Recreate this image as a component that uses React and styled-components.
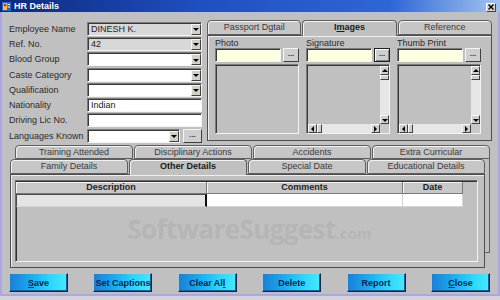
import React from 'react'
import styled, { createGlobalStyle } from 'styled-components'

const GlobalStyle = createGlobalStyle`
  * { box-sizing: border-box; }
  html, body { margin: 0; padding: 0; background: #d4d4d8; }
  body {
    font-family: "Liberation Sans", Arial, sans-serif;
    font-size: 9px;
    color: #262626;
  }
`

const Window = styled.div`
  width: 500px;
  display: flex;
  flex-direction: column;
`

const TitleBar = styled.div`
  height: 12px;
  display: flex;
  align-items: center;
  gap: 3px;
  padding: 0 4px 0 2px;
  background: linear-gradient(to right, #0b2a7e 0%, #1f4fc0 40%, #2f66d6 78%, #a3c4f0 100%);
  color: #fff;
  font-weight: bold;
  font-size: 9px;
`

const TitleText = styled.span`
  flex: 1;
`

const CloseBox = styled.div`
  width: 10px;
  height: 9px;
  margin-top: 2px;
  background: #d6d3ce;
  border: 1px solid;
  border-color: #fff #404040 #404040 #fff;
  display: flex;
  align-items: center;
  justify-content: center;
`

const Body = styled.div`
  background: #c0c0c0;
  border: 2px solid #aca6e6;
  border-top: none;
  padding: 8px 6px 2px 7px;
  display: flex;
  flex-direction: column;
`

const TopSection = styled.div`
  display: flex;
  gap: 5px;
  height: 121px;
`

const Form = styled.div`
  width: 193px;
  padding-top: 1px;
  display: grid;
  grid-template-columns: 78px 115px;
  grid-auto-rows: 15.3px;
  align-items: center;
`

const Label = styled.div`
  white-space: nowrap;
  color: #2a2a2a;
`

const Field = styled.div`
  height: 14px;
  width: ${({ $w }) => ($w ? `${$w}px` : '100%')};
  flex: ${({ $w }) => ($w ? 'none' : '1')};
  background: ${({ $tone }) =>
    $tone === 'gray' ? '#d8d8d8' : $tone === 'yellow' ? '#ffffe1' : '#fff'};
  border: 1px solid;
  border-color: #7a7a7a #f4f4f4 #f4f4f4 #7a7a7a;
  box-shadow: inset 1px 1px 0 #3a3a3a;
  display: flex;
  align-items: stretch;
`

const FieldText = styled.span`
  flex: 1;
  padding: 1px 0 0 3px;
  line-height: 11px;
  color: #222;
  white-space: nowrap;
  overflow: hidden;
`

const DropButton = styled.div`
  width: 10px;
  margin: 1px 0 0 0;
  background: #d4d0c8;
  border: 1px solid;
  border-color: #f8f8f8 #404040 #404040 #f8f8f8;
  display: flex;
  align-items: center;
  justify-content: center;
`

const Arrow = styled.span`
  width: 0;
  height: 0;
  border: 3px solid transparent;
  ${({ $dir }) =>
    ({
      down: 'border-top: 3px solid #000; border-bottom: none; margin-top: 1px;',
      up: 'border-bottom: 3px solid #000; border-top: none;',
      left: 'border-right: 3px solid #000; border-left: none;',
      right: 'border-left: 3px solid #000; border-right: none;',
    })[$dir]}
`

const InlineRow = styled.div`
  display: flex;
  align-items: center;
  gap: ${({ $gap }) => $gap || 2}px;
`

const DotsButton = styled.div`
  width: ${({ $w }) => $w || 16}px;
  height: 14px;
  flex: none;
  background: #cfcfcf;
  border: 1px solid;
  border-color: ${({ $focused }) =>
    $focused ? '#202020' : '#f4f4f4 #404040 #404040 #f4f4f4'};
  box-shadow: ${({ $focused }) => ($focused ? 'inset 1px 1px 0 #fff, inset -1px -1px 0 #808080' : 'none')};
  font-size: 8px;
  font-weight: bold;
  line-height: 9px;
  text-align: center;
  color: #333;
`

const TabControl = styled.div`
  width: 285px;
  display: flex;
  flex-direction: column;
`

const TabStrip = styled.div`
  display: flex;
  gap: ${({ $gap }) => $gap}px;
  height: ${({ $h }) => $h}px;
  margin: ${({ $m }) => $m || '0'};
  position: relative;
  z-index: 2;
`

const Tab = styled.div`
  flex: 1;
  height: ${({ $active }) => ($active ? 'calc(100% + 1px)' : '100%')};
  border: 1px solid #5e5e5e;
  border-bottom: ${({ $active }) => ($active ? 'none' : '1px solid #5e5e5e')};
  border-radius: 4px 4px 0 0;
  background: ${({ $active }) => ($active ? '#c0c0c0' : '#c6c6c6')};
  box-shadow: inset 1px 1px 0 #f2f2f2;
  text-align: center;
  line-height: 13px;
  font-weight: ${({ $active }) => ($active ? 'bold' : 'normal')};
  color: ${({ $active }) => ($active ? '#1a1a1a' : '#3a3a3a')};
  white-space: nowrap;
  overflow: hidden;
`

const ImagesPanel = styled.div`
  flex: 1;
  position: relative;
  z-index: 1;
  background: #c0c0c0;
  border: 1px solid #4e4e4e;
  box-shadow: inset 1px 1px 0 #eeeeee;
  padding: 2px 8px 0 7px;
  display: grid;
  grid-template-columns: repeat(3, 84px);
  column-gap: 7px;
  align-content: start;
`

const ImageColumn = styled.div`
  display: flex;
  flex-direction: column;
`

const Caption = styled.div`
  height: 10px;
  line-height: 10px;
  color: #2a2a2a;
`

const ScrollBox = styled.div`
  margin-top: 2px;
  height: 70px;
  background: #c0c0c0;
  border: 1px solid;
  border-color: #7a7a7a #f4f4f4 #f4f4f4 #7a7a7a;
  box-shadow: inset 1px 1px 0 #3a3a3a;
  padding: 1px 0 0 1px;
  display: grid;
  grid-template-columns: ${({ $scroll }) => ($scroll ? '1fr 9px' : '1fr')};
  grid-template-rows: ${({ $scroll }) => ($scroll ? '1fr 9px' : '1fr')};
`

const ScrollBar = styled.div`
  display: flex;
  flex-direction: ${({ $vertical }) => ($vertical ? 'column' : 'row')};
  background: #e6e6e6;
`

const ScrollButton = styled.div`
  width: 9px;
  height: 9px;
  flex: none;
  background: #d0d0d0;
  border: 1px solid;
  border-color: #f8f8f8 #404040 #404040 #f8f8f8;
  display: flex;
  align-items: center;
  justify-content: center;
`

const ScrollThumb = styled.div`
  flex: none;
  width: ${({ $vertical }) => ($vertical ? '9px' : '5px')};
  height: ${({ $vertical }) => ($vertical ? '5px' : '9px')};
  background: #d0d0d0;
  border: 1px solid;
  border-color: #f8f8f8 #404040 #404040 #f8f8f8;
`

const ScrollTrack = styled.div`
  flex: 1;
`

const Corner = styled.div`
  background: #c8c8c8;
`

const BottomTabs = styled.div`
  position: relative;
  margin-top: 4px;
  display: flex;
  flex-direction: column;

  &::after {
    content: '';
    position: absolute;
    right: 2px;
    top: 14px;
    bottom: 15px;
    width: 7px;
    background: #c0c0c0;
    border: 1px solid #5e5e5e;
    border-left: none;
    border-top: none;
    z-index: 0;
  }
`

const DetailsPanel = styled.div`
  height: 94px;
  margin: 0 7px 0 1px;
  position: relative;
  z-index: 1;
  background: #c0c0c0;
  border: 1px solid #4e4e4e;
  box-shadow: inset 1px 1px 0 #eeeeee;
  padding: 5px 6px 5px 4px;
`

const Grid = styled.div`
  height: 100%;
  background: #c0c0c0;
  border: 1px solid;
  border-color: #6a6a6a #f4f4f4 #f4f4f4 #6a6a6a;
  box-shadow: inset 1px 1px 0 #303030;
  padding: 1px 0 0 0;
  display: flex;
  flex-direction: column;
`

const GridRow = styled.div`
  display: flex;
  height: ${({ $h }) => $h}px;
  flex: none;
`

const HeaderCell = styled.div`
  width: ${({ $w }) => $w}px;
  background: #c8c8c8;
  border-right: 1px solid #7a7a7a;
  border-bottom: 1px solid #7a7a7a;
  box-shadow: inset 1px 1px 0 #f4f4f4;
  font-weight: bold;
  text-align: center;
  line-height: 11px;
  color: #222;
`

const DataCell = styled.div`
  width: ${({ $w }) => $w}px;
  background: ${({ $current }) => ($current ? '#e4e4e4' : '#ffffff')};
  border: ${({ $current }) => ($current ? '1px solid #4a4a4a' : 'none')};
  border-right: ${({ $current }) => ($current ? '2px solid #101010' : '1px solid #d4d4d4')};
  border-bottom: 1px solid #d4d4d4;
`

const WatermarkArea = styled.div`
  flex: 1;
  display: flex;
  align-items: center;
  justify-content: center;
  padding: 0 0 10px 6px;
`

const Watermark = styled.div`
  font-family: "Open Sans", "Liberation Sans", sans-serif;
  font-weight: bold;
  font-size: 26px;
  letter-spacing: -0.6px;
  color: #b5b5b5;

  span {
    font-size: 15px;
    letter-spacing: 0;
  }
`

const ButtonBar = styled.div`
  width: 481px;
  margin-top: 5px;
  display: flex;
  justify-content: space-between;
`

const ActionButton = styled.button`
  width: 59px;
  height: 19px;
  padding: 0;
  border: 1px solid;
  border-color: #a8c8dc #1a2640 #1a2640 #a8c8dc;
  box-shadow: inset -1px -1px 0 #2a5a90;
  background: linear-gradient(to right, #1a80d8 0%, #18aaf0 35%, #2ad6ff 70%, #48e8ff 100%);
  font-family: "Liberation Sans", Arial, sans-serif;
  font-size: 9px;
  font-weight: bold;
  color: #0e1c4a;

  u {
    text-decoration-thickness: 1px;
  }
`

const Combo = ({ text, tone, width }) => (
  <Field $tone={tone} $w={width}>
    <FieldText>{text}</FieldText>
    <DropButton>
      <Arrow $dir="down" />
    </DropButton>
  </Field>
)

const ImageSlot = ({ caption, scroll, focused }) => (
  <ImageColumn>
    <Caption>{caption}</Caption>
    <InlineRow $gap={2}>
      <Field $tone="yellow" />
      <DotsButton $focused={focused}>...</DotsButton>
    </InlineRow>
    <ScrollBox $scroll={scroll}>
      <div />
      {scroll && (
        <>
          <ScrollBar $vertical>
            <ScrollButton>
              <Arrow $dir="up" />
            </ScrollButton>
            <ScrollThumb $vertical />
            <ScrollTrack />
            <ScrollButton>
              <Arrow $dir="down" />
            </ScrollButton>
          </ScrollBar>
          <ScrollBar>
            <ScrollButton>
              <Arrow $dir="left" />
            </ScrollButton>
            <ScrollThumb />
            <ScrollTrack />
            <ScrollButton>
              <Arrow $dir="right" />
            </ScrollButton>
          </ScrollBar>
          <Corner />
        </>
      )}
    </ScrollBox>
  </ImageColumn>
)

const AppIcon = () => (
  <svg width="9" height="9" viewBox="0 0 9 9">
    <rect x="0" y="0" width="9" height="9" fill="#2a64c8" />
    <rect x="1" y="1" width="4" height="7" fill="#f2c230" />
    <circle cx="3" cy="3" r="1.3" fill="#c03018" />
    <rect x="5.5" y="2" width="2.5" height="1" fill="#fff" />
    <rect x="5.5" y="4.5" width="2.5" height="1" fill="#fff" />
  </svg>
)

const CloseIcon = () => (
  <svg width="6" height="6" viewBox="0 0 6 6">
    <path d="M0.5 0.5 L5.5 5.5 M5.5 0.5 L0.5 5.5" stroke="#000" strokeWidth="1.4" />
  </svg>
)

export default function App() {
  return (
    <>
      <GlobalStyle />
      <Window>
        <TitleBar>
          <AppIcon />
          <TitleText>HR Details</TitleText>
          <CloseBox>
            <CloseIcon />
          </CloseBox>
        </TitleBar>
        <Body>
          <TopSection>
            <Form>
              <Label>Employee Name</Label>
              <Combo text="DINESH K." tone="gray" />
              <Label>Ref. No.</Label>
              <Combo text="42" tone="gray" />
              <Label>Blood Group</Label>
              <Combo />
              <Label>Caste Category</Label>
              <Combo />
              <Label>Qualification</Label>
              <Combo />
              <Label>Nationality</Label>
              <Field>
                <FieldText>Indian</FieldText>
              </Field>
              <Label>Driving Lic No.</Label>
              <Field />
              <Label>Languages Known</Label>
              <InlineRow $gap={3}>
                <Combo width={93} />
                <DotsButton $w={19}>...</DotsButton>
              </InlineRow>
            </Form>
            <TabControl>
              <TabStrip $gap={1} $h={15}>
                <Tab>Passport Dgtail</Tab>
                <Tab $active>
                  I<u>m</u>ages
                </Tab>
                <Tab>Reference</Tab>
              </TabStrip>
              <ImagesPanel>
                <ImageSlot caption="Photo" />
                <ImageSlot caption="Signature" scroll focused />
                <ImageSlot caption="Thumb Print" scroll />
              </ImagesPanel>
            </TabControl>
          </TopSection>
          <BottomTabs>
            <TabStrip $gap={1} $h={14} $m="0 2px 0 6px">
              <Tab>Training Attended</Tab>
              <Tab>Disciplinary Actions</Tab>
              <Tab>Accidents</Tab>
              <Tab>Extra Curricular</Tab>
            </TabStrip>
            <TabStrip $gap={1} $h={15} $m="0 7px 0 1px">
              <Tab>Family Details</Tab>
              <Tab $active>Other Details</Tab>
              <Tab>Special Date</Tab>
              <Tab>Educational Details</Tab>
            </TabStrip>
            <DetailsPanel>
              <Grid>
                <GridRow $h={12}>
                  <HeaderCell $w={191}>Description</HeaderCell>
                  <HeaderCell $w={196}>Comments</HeaderCell>
                  <HeaderCell $w={60}>Date</HeaderCell>
                </GridRow>
                <GridRow $h={13}>
                  <DataCell $w={191} $current />
                  <DataCell $w={196} />
                  <DataCell $w={60} />
                </GridRow>
                <WatermarkArea>
                  <Watermark>
                    SoftwareSuggest<span>.com</span>
                  </Watermark>
                </WatermarkArea>
              </Grid>
            </DetailsPanel>
          </BottomTabs>
          <ButtonBar>
            <ActionButton>
              <u>S</u>ave
            </ActionButton>
            <ActionButton>Set Captions</ActionButton>
            <ActionButton>
              Clear Al<u>l</u>
            </ActionButton>
            <ActionButton>Delete</ActionButton>
            <ActionButton>Report</ActionButton>
            <ActionButton>
              <u>C</u>lose
            </ActionButton>
          </ButtonBar>
        </Body>
      </Window>
    </>
  )
}
